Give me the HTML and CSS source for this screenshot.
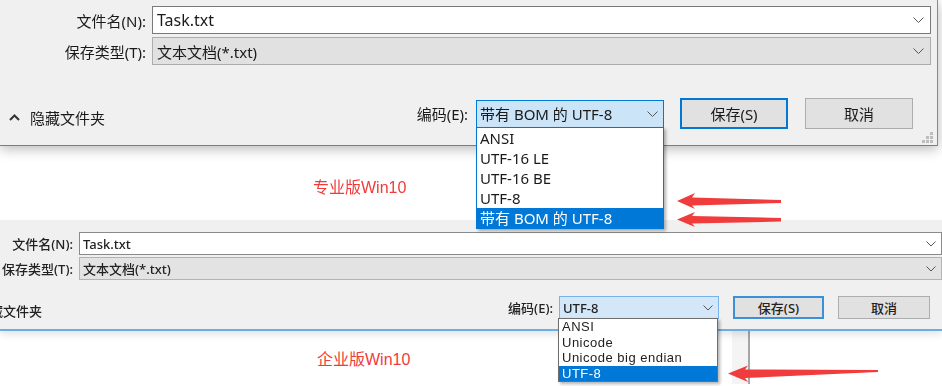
FILE: index.html
```html
<!DOCTYPE html>
<html>
	<head>
		<title>记事本编码对比</title>
		<link rel="stylesheet" href="styles.css">
	</head>

	<body>
		<!-- 专业版 -->
		<div class="shot pro">
			<div class="dialog">
				<div class="fields">
					<div class="lbl">文件名(N):</div>
					<div class="box input">
						<span>Task.txt</span>
						<svg class="chev" width="11" height="6" viewBox="0 0 11 6"><polyline points="0.5,0.5 5.5,5.5 10.5,0.5"/></svg>
					</div>
					<div class="lbl">保存类型(T):</div>
					<div class="box select">
						<span>文本文档(*.txt)</span>
						<svg class="chev" width="11" height="6" viewBox="0 0 11 6"><polyline points="0.5,0.5 5.5,5.5 10.5,0.5"/></svg>
					</div>
				</div>

				<div class="actions">
					<div class="toggle">
						<svg class="up" width="11" height="7" viewBox="0 0 11 7"><polyline points="1,6 5.5,1.5 10,6"/></svg>
						<span>隐藏文件夹</span>
					</div>
					<div class="enc_lbl">编码(E):</div>
					<div class="box enc">
						<span>带有 BOM 的 UTF-8</span>
						<svg class="chev" width="11" height="6" viewBox="0 0 11 6"><polyline points="0.5,0.5 5.5,5.5 10.5,0.5"/></svg>
					</div>
					<div class="btn primary">保存(S)</div>
					<div class="btn">取消</div>
				</div>

				<svg class="grip" width="11" height="11" viewBox="0 0 11 11">
					<rect x="8" y="0" width="3" height="3"/>
					<rect x="4" y="4" width="3" height="3"/>
					<rect x="8" y="4" width="3" height="3"/>
					<rect x="0" y="8" width="3" height="3"/>
					<rect x="4" y="8" width="3" height="3"/>
					<rect x="8" y="8" width="3" height="3"/>
				</svg>
			</div>

			<div class="below">
				<span class="caption">专业版Win10</span>
			</div>

			<ul class="list">
				<li>ANSI</li>
				<li>UTF-16 LE</li>
				<li>UTF-16 BE</li>
				<li>UTF-8</li>
				<li class="sel">带有 BOM 的 UTF-8</li>
			</ul>

			<svg class="arrows" width="942" height="386" viewBox="0 0 942 386">
				<polygon points="677,201 695,193 692,197.5 781,200 781,203 692,205.5 695,209"/>
				<polygon points="677,219.5 695,212 692,216 781,218 781,221.5 692,223.5 695,227"/>
			</svg>
		</div>

		<!-- 企业版 -->
		<div class="shot ent">
			<div class="dialog">
				<div class="fields">
					<div class="lbl">文件名(N):</div>
					<div class="box input">
						<span>Task.txt</span>
						<svg class="chev" width="10" height="6" viewBox="0 0 10 6"><polyline points="0.5,0.5 5,5 9.5,0.5"/></svg>
					</div>
					<div class="lbl">保存类型(T):</div>
					<div class="box select">
						<span>文本文档(*.txt)</span>
						<svg class="chev" width="10" height="6" viewBox="0 0 10 6"><polyline points="0.5,0.5 5,5 9.5,0.5"/></svg>
					</div>
				</div>

				<div class="actions">
					<div class="toggle"><span>隐藏文件夹</span></div>
					<div class="enc_lbl">编码(E):</div>
					<div class="box enc">
						<span>UTF-8</span>
						<svg class="chev" width="10" height="6" viewBox="0 0 10 6"><polyline points="0.5,0.5 5,5 9.5,0.5"/></svg>
					</div>
					<div class="btn primary">保存(S)</div>
					<div class="btn">取消</div>
				</div>
			</div>

			<div class="below">
				<div class="left"><span class="caption">企业版Win10</span></div>
				<div class="behind"></div>
				<div class="edge"></div>
				<div class="rest"></div>
			</div>

			<ul class="list">
				<li>ANSI</li>
				<li>Unicode</li>
				<li>Unicode big endian</li>
				<li class="sel">UTF-8</li>
			</ul>

			<svg class="arrows" width="942" height="166" viewBox="0 220 942 166">
				<polygon points="728,373.5 748,365.5 745,369.5 878,370 878,372 745,378 748,382"/>
			</svg>
		</div>
	</body>
</html>
```

FILE: styles.css
```css
	body
	{
		margin: 0;
		width: 942px;
		height: 386px;
		overflow: hidden;
		background-color: white;
		font-family: "Noto Sans", "Noto Sans CJK SC", sans-serif;
		color: #1a1a1a;
	}

	.shot
	{
		position: relative;
	}

	.pro
	{
		height: 220px;
		z-index: 2;
	}

	.ent
	{
		height: 166px;
		z-index: 1;
		overflow: hidden;
	}

	.dialog
	{
		position: relative;
		box-sizing: border-box;
		background-color: #f0f0f0;
	}

	.box
	{
		box-sizing: border-box;
		display: flex;
		align-items: center;
		justify-content: space-between;
		border: 1px solid #7a7a7a;
		background-color: white;
	}

	.box span
	{
		white-space: nowrap;
	}

	.chev polyline
	{
		fill: none;
		stroke: #555;
		stroke-width: 1;
	}

	.fields
	{
		display: grid;
		align-items: center;
	}

	.lbl
	{
		text-align: right;
		white-space: nowrap;
	}

	.actions
	{
		display: flex;
		align-items: center;
	}

	.toggle
	{
		display: flex;
		align-items: center;
		margin-right: auto;
		white-space: nowrap;
	}

	.enc_lbl
	{
		white-space: nowrap;
	}

	.btn
	{
		box-sizing: border-box;
		display: flex;
		align-items: center;
		justify-content: center;
		border: 1px solid #adadad;
		background-color: #e1e1e1;
	}

	.btn.primary
	{
		border: 2px solid #0078d7;
	}

	.list
	{
		position: absolute;
		margin: 0;
		padding: 0;
		list-style: none;
		box-sizing: border-box;
		background-color: white;
		box-shadow: 2px 2px 3px rgba(0, 0, 0, 0.3);
	}

	.list li
	{
		white-space: nowrap;
	}

	.list li.sel
	{
		background-color: #0078d7;
		color: white;
	}

	.arrows
	{
		position: absolute;
		left: 0;
		top: 0;
		pointer-events: none;
	}

	.arrows polygon
	{
		fill: #f03c3c;
	}

	.caption
	{
		font-family: "Liberation Sans", "Noto Sans CJK SC", sans-serif;
		color: #f23a3a;
		white-space: nowrap;
	}

	/* 专业版 */

	.pro .dialog
	{
		width: 938px;
		height: 146px;
		border-right: 1px solid #8a8a8a;
		border-bottom: 1px solid #7d7d7d;
		box-shadow: 0 3px 12px rgba(0, 0, 0, 0.28);
		font-size: 15px;
		padding-top: 6px;
	}

	.pro .fields
	{
		grid-template-columns: 146px 779px;
		column-gap: 6px;
		row-gap: 3px;
	}

	.pro .box
	{
		height: 28px;
		padding: 0 6px 0 4px;
	}

	.pro .input span
	{
		font-size: 16px;
	}

	.pro .select
	{
		background-color: #e1e1e1;
		border-color: #adadad;
	}

	.pro .actions
	{
		height: 31px;
		margin-top: 33px;
		padding-right: 24px;
	}

	.pro .toggle
	{
		padding-left: 9px;
		padding-top: 7px;
	}

	.pro .toggle .up
	{
		margin-right: 10px;
	}

	.up polyline
	{
		fill: none;
		stroke: #333;
		stroke-width: 2;
	}

	.pro .enc_lbl
	{
		margin-right: 8px;
	}

	.pro .enc
	{
		width: 188px;
		padding: 0 5px 0 3px;
		background-color: #cce4f7;
		border-color: #0078d7;
	}

	.pro .btn
	{
		width: 108px;
		height: 31px;
	}

	.pro .btn.primary
	{
		margin: 0 17px 0 16px;
	}

	.grip
	{
		position: absolute;
		left: 922px;
		top: 132px;
	}

	.grip rect
	{
		fill: #bdbdbd;
	}

	.pro .below
	{
		padding: 28px 0 0 313px;
		font-size: 16px;
	}

	.pro .list
	{
		left: 476px;
		top: 127px;
		width: 188px;
		border: 1px solid #0078d7;
		font-size: 15px;
	}

	.pro .list li
	{
		height: 20px;
		line-height: 20px;
		padding-left: 3px;
	}

	/* 企业版：截图放大过，略带模糊 */

	.ent .dialog,
	.ent .list
	{
		filter: blur(0.35px);
	}

	.ent .dialog
	{
		width: 942px;
		height: 111px;
		border-bottom: 2px solid #6aaee6;
		box-shadow: 0 3px 8px rgba(0, 0, 0, 0.12);
		font-size: 13px;
		font-weight: 500;
		color: #222;
		padding-top: 12px;
	}

	.ent .fields
	{
		grid-template-columns: 73px 863px;
		column-gap: 6px;
		row-gap: 2px;
	}

	.ent .box
	{
		height: 23px;
		padding: 0 5px 0 3px;
		border-color: #8a8a8a;
	}

	.ent .select
	{
		background-color: #e3e3e3;
		border-color: #b3b3b3;
	}

	.ent .actions
	{
		height: 23px;
		margin-top: 16px;
		padding-right: 12px;
	}

	.ent .toggle
	{
		margin-left: -23px;
		padding-top: 6px;
	}

	.ent .enc_lbl
	{
		margin-right: 6px;
	}

	.ent .enc
	{
		width: 160px;
		background-color: #d3e7f8;
		border-color: #77b2e8;
	}

	.ent .btn
	{
		height: 23px;
		width: 92px;
	}

	.ent .btn.primary
	{
		width: 91px;
		margin: 0 14px 0 14px;
		border-color: #3d8fd8;
	}

	.ent .below
	{
		display: flex;
		height: 53px;
	}

	.ent .left
	{
		width: 317px;
		padding: 15px 0 0 317px;
		font-size: 16px;
	}

	.ent .behind
	{
		width: 16px;
		margin-left: 98px;
		background-color: #f4f4f4;
	}

	.ent .edge
	{
		width: 2px;
		background-color: #a6a6a6;
	}

	.ent .list
	{
		left: 558px;
		top: 98px;
		width: 160px;
		border: 1px solid #6e6e6e;
		font-family: "Liberation Sans", "Noto Sans CJK SC", sans-serif;
		font-size: 13px;
		letter-spacing: 0.5px;
		color: #222;
	}

	.ent .list li
	{
		height: 15.5px;
		line-height: 15.5px;
		padding-left: 3px;
	}
```
